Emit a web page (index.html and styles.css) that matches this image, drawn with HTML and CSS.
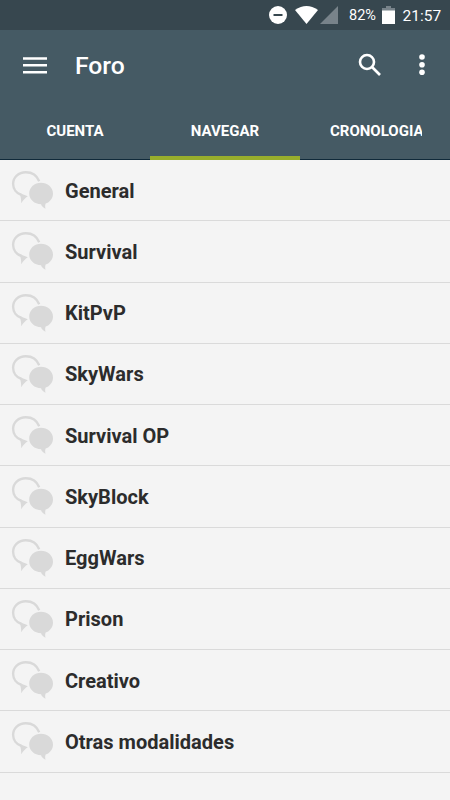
FILE: index.html
```html
<!DOCTYPE html>
<html lang="es">
<head>
<meta charset="utf-8">
<title>Foro</title>
<link rel="stylesheet" href="styles.css">
</head>
<body>
<svg class="sprite" aria-hidden="true">
  <symbol id="chat" viewBox="0 0 46 42">
    <path class="ring" d="M29.200 12.200C27 6.500 22 3.200 15.800 3.200C8.500 3.200 3.100 8.300 3.100 14.800C3.100 20 6.500 24.500 11.500 26"/>
    <path d="M9.500 24L17.800 27.200C15.300 28.800 13.200 31 11.200 34.300C11.300 31 10.900 28 9.500 24Z"/>
    <path d="M31 13.800C37.500 13.800 43 18.500 43 24.500C43 29.300 39.800 33.300 35.600 34.600C35 36.300 35.100 38 35.500 39.700C33 38.500 31.800 37.200 31 35.200C24.500 35.200 19.200 30.500 19.200 24.500C19.200 18.500 24.500 13.800 31 13.800Z"/>
  </symbol>
</svg>
<div class="status">
  <svg class="dnd" viewBox="0 0 18 18"><circle cx="9" cy="9" r="9"/><path d="M4.500 9H13.500"/></svg>
  <svg class="wifi" viewBox="0 0 23 18"><path d="M0 4Q11.500-4 23 4L11.500 18Z"/></svg>
  <svg class="signal" viewBox="0 0 18 18"><path d="M18 0V18H0Z"/></svg>
  <span class="percent">82%</span>
  <svg class="battery" viewBox="0 0 13 18"><path class="cap" d="M4 0H9V2H13V5H0V2H4Z"/><path d="M0 4.500H13V18H0Z"/></svg>
  <span class="clock">21:57</span>
</div>
<header>
  <div class="toolbar">
    <svg class="menu" viewBox="0 0 24 17"><path d="M0 1.500H24M0 8.300H24M0 15.300H24"/></svg>
    <h1>Foro</h1>
    <svg class="search" viewBox="0 0 24 24"><circle cx="9" cy="9" r="7"/><path d="M14 14L22 22"/></svg>
    <svg class="more" viewBox="0 0 6 22"><circle cx="3" cy="3" r="2.800"/><circle cx="3" cy="10.700" r="2.800"/><circle cx="3" cy="18.300" r="2.800"/></svg>
  </div>
  <nav>
    <a>CUENTA</a>
    <a class="active">NAVEGAR</a>
    <a class="clipped"><span>CRONOLOGIA</span></a>
  </nav>
</header>
<ul>
  <li><svg><use href="#chat"/></svg><span>General</span></li>
  <li><svg><use href="#chat"/></svg><span>Survival</span></li>
  <li><svg><use href="#chat"/></svg><span>KitPvP</span></li>
  <li><svg><use href="#chat"/></svg><span>SkyWars</span></li>
  <li><svg><use href="#chat"/></svg><span>Survival OP</span></li>
  <li><svg><use href="#chat"/></svg><span>SkyBlock</span></li>
  <li><svg><use href="#chat"/></svg><span>EggWars</span></li>
  <li><svg><use href="#chat"/></svg><span>Prison</span></li>
  <li><svg><use href="#chat"/></svg><span>Creativo</span></li>
  <li><svg><use href="#chat"/></svg><span>Otras modalidades</span></li>
</ul>
</body>
</html>
```
FILE: styles.css
```css
* { box-sizing: border-box; }
body {
  margin: 0;
  width: 450px;
  height: 800px;
  overflow: hidden;
  background: #f4f4f4;
  font-family: Roboto, "Liberation Sans", sans-serif;
}
svg { display: block; flex: none; }
.sprite { display: none; }
.status {
  display: flex;
  align-items: center;
  height: 30px;
  padding-left: 269px;
  background: #37474f;
  color: #fff;
  fill: #fff;
  font-size: 15.5px;
}
.dnd { width: 18px; height: 18px; }
.dnd path { stroke: #37474f; stroke-width: 2; }
.wifi { width: 23px; height: 18px; margin-left: 8px; }
.signal { width: 18px; height: 18px; margin-left: 2px; fill: #78838a; }
.percent { width: 33px; margin-left: 11px; padding-top: 1px; font-size: 14.5px; white-space: nowrap; }
.battery { width: 13px; height: 18px; }
.cap { fill: #78838a; }
.clock { margin-left: 7.5px; padding-top: 1px; }
header {
  height: 130px;
  background: #455a64;
  color: #fff;
}
.toolbar {
  display: flex;
  align-items: center;
  height: 70px;
  padding-left: 23px;
}
.menu { width: 24px; height: 17px; stroke: #fff; stroke-width: 2.5; }
h1 {
  width: 283px;
  margin: 2px 0 0 28px;
  font-size: 24.7px;
  font-weight: 500;
  line-height: 30px;
}
.search { width: 24px; height: 24px; fill: none; stroke: #fff; stroke-width: 2.6; }
.more { width: 6px; height: 22px; margin-left: 37px; fill: #fff; }
nav {
  display: grid;
  grid-template-columns: repeat(3, 150px);
  height: 60px;
  border-bottom: 1px solid #102a3a;
}
nav a {
  display: flex;
  align-items: center;
  justify-content: center;
  height: 60px;
  padding-top: 2px;
  font-size: 15px;
  font-weight: 700;
}
nav .active { border-bottom: 4px solid #98ae2c; padding-top: 6px; }
nav .clipped { justify-content: flex-start; padding-left: 30px; }
.clipped span { width: 92px; overflow: hidden; white-space: nowrap; }
ul { margin: 0; padding: 0; list-style: none; }
li {
  display: flex;
  align-items: center;
  height: 61.25px;
  padding: 0 0 0 10px;
  border-bottom: 1px solid #dadada;
  color: #2c2c2c;
  font-size: 20.05px;
  font-weight: 700;
}
li svg { width: 46px; height: 42px; margin-right: 9px; fill: #d9d9d9; }
li span { padding-top: 1.2px; }
.ring { fill: none; stroke: #d9d9d9; stroke-width: 2.4; }
```
